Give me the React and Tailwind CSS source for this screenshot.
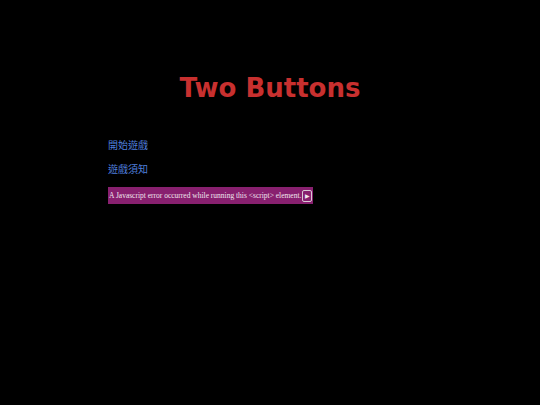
export default function App() {
  return (
    <div className="min-h-[405px] w-full bg-black font-['DejaVu_Sans',sans-serif]">
      <div className="mx-auto w-[324px] pt-[72px]">
        <h1 className="text-center text-[26px] font-bold leading-[32px] text-[#c8302f]">
          Two Buttons
        </h1>
        <div className="mt-[35px] flex flex-col gap-[13px] text-[10px] leading-[11px] text-[#4f7fdc] font-['Noto_Sans_CJK_TC',sans-serif]">
          <a href="#" className="w-fit">開始遊戲</a>
          <a href="#" className="w-fit">遊戲須知</a>
        </div>
        <div className="mt-[13px] flex h-[17px] w-[205px] items-center justify-between whitespace-nowrap bg-[#88206f] pl-[1px] pr-[1px] font-['Liberation_Serif',serif] text-[7.5px] text-[#f0e6ee]">
          <span>A Javascript error occurred while running this &lt;script&gt; element.</span>
          <span className="flex h-[12px] w-[10px] shrink-0 items-center justify-center rounded-[2px] border border-[#d8c8d4] text-[6px] leading-none">
            ▶
          </span>
        </div>
      </div>
    </div>
  );
}
